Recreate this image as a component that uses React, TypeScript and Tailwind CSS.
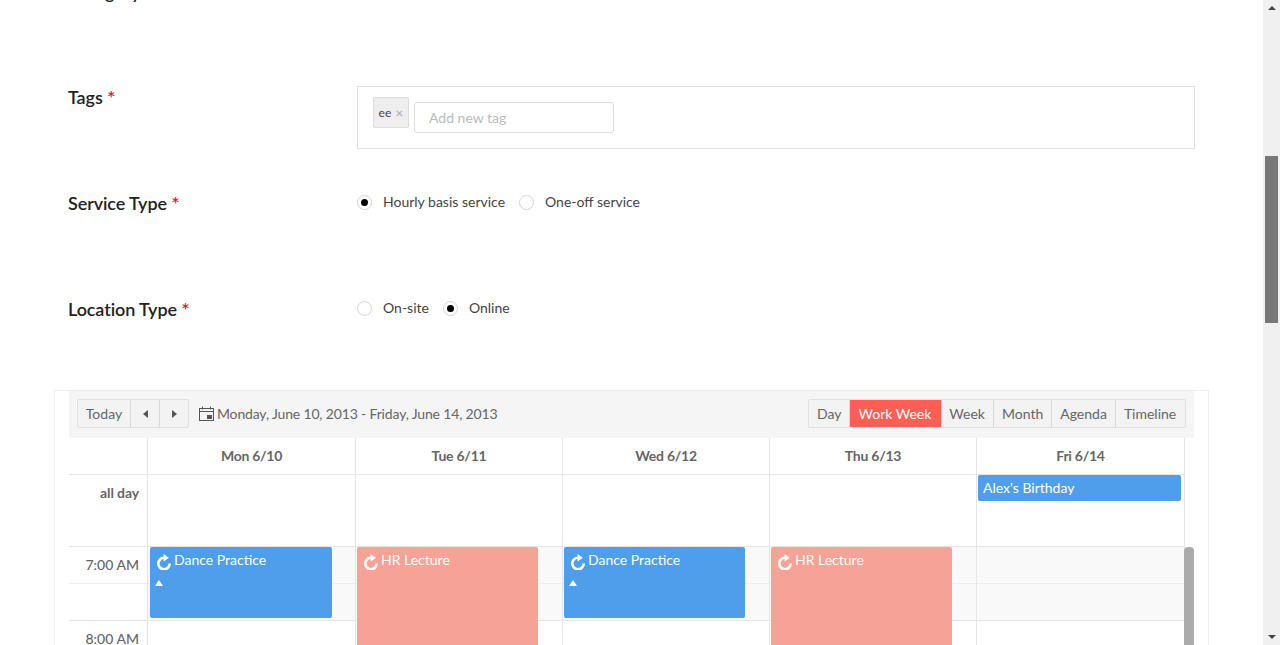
import React from 'react'

const days = ['Mon 6/10', 'Tue 6/11', 'Wed 6/12', 'Thu 6/13', 'Fri 6/14']
const dayWidths = ['w-[208px]', 'w-[207px]', 'w-[207px]', 'w-[207px]', 'w-[209px]']
const views = [
  { name: 'Day', pad: 'px-[8px]' },
  { name: 'Work Week', pad: 'pr-[10px] pl-[8px] bg-[#ff5e55] text-white' },
  { name: 'Week', pad: 'pr-[8px] pl-[7px]' },
  { name: 'Month', pad: 'px-[8px]' },
  { name: 'Agenda', pad: 'px-[8px]' },
  { name: 'Timeline', pad: 'pr-[8px] pl-[8px] grow' },
]

function Label({ text }: { text: string }) {
  return (
    <div className="w-[289px] shrink-0 text-[18px] leading-[22px] font-semibold tracking-[-0.1px] text-[#222]">
      {text} <span className="relative top-[1px] text-[20px] leading-[16px] text-[#e8192c]">*</span>
    </div>
  )
}

function Radio({ label, checked }: { label: string; checked?: boolean }) {
  return (
    <div className="flex items-center gap-[11px]">
      <span className="flex h-[15px] w-[15px] items-center justify-center rounded-full border border-[#d4d4d4] bg-white">
        {checked && <span className="h-[7px] w-[7px] rounded-full bg-black" />}
      </span>
      <span className="text-[14px] leading-[20px] text-[#444]">{label}</span>
    </div>
  )
}

function Repeat({ className }: { className?: string }) {
  return (
    <svg viewBox="0 0 16 16" className={className}>
      <path d="M8 3.8 A5.7 5.7 0 1 0 13.7 9.5" fill="none" stroke="white" strokeWidth="2.6" />
      <path d="M7.6 0 L12.8 3.8 L7.6 7.4 Z" fill="white" />
    </svg>
  )
}

function CalendarIcon() {
  return (
    <svg viewBox="0 0 15 15" className="ml-[10px] h-[15px] w-[15px] shrink-0">
      <rect x="0.5" y="2.5" width="14" height="12" fill="none" stroke="#555" />
      <path d="M0.5 5.5 H14.5" stroke="#555" />
      <path d="M3.5 0.5 V3.5 M11.5 0.5 V3.5" stroke="#555" />
      <rect x="8" y="9" width="5" height="4" fill="#555" />
    </svg>
  )
}

function EventBlock({ title, color, x, h, w, up }: { title: string; color: string; x: string; h: string; w: string; up?: boolean }) {
  return (
    <div className={`absolute top-0 z-10 rounded-t-[2px] px-[5px] pt-[3px] text-[14px] leading-[20px] text-white ${color} ${x} ${h} ${w}`}>
      <div className="flex items-start gap-[2px]">
        <Repeat className="mt-[4px] ml-[1px] h-[16px] w-[16px] shrink-0" />
        <span>{title}</span>
      </div>
      {up && <div className="mt-[10px] h-0 w-0 border-x-[4px] border-b-[6px] border-x-transparent border-b-white" />}
    </div>
  )
}

export default function App() {
  return (
    <div className="flex h-[645px] overflow-hidden bg-white font-['Lato','Liberation_Sans',sans-serif]">
      <main className="min-w-0 flex-1 overflow-hidden pl-[54px]">
        <div className="mt-[-20px] h-[20px] pl-[14px] text-[18px] leading-[24px] font-semibold text-[#222]">Category</div>

        <section className="pt-[86px] pl-[14px]">
          <div className="flex">
            <Label text="Tags" />
            <div className="flex h-[63px] w-[838px] items-start gap-[5px] border border-[#e2e2e2] px-[15px] pt-[10px]">
              <span className="flex h-[31px] w-[36px] items-center justify-center gap-[4px] rounded-[2px] border border-[#dcdcdc] bg-[#eeeeee] text-[12px] text-[#444]">
                ee <span className="text-[14px] text-[#aaa]">×</span>
              </span>
              <div className="mt-[5px] flex h-[31px] w-[200px] items-center rounded-[3px] border border-[#dedede] px-[14px] pb-[1px] text-[14px] text-[#bbb]">Add new tag</div>
            </div>
          </div>
          <div className="mt-[43px] flex h-[63px]">
            <Label text="Service Type" />
            <div className="flex h-[20px] gap-[14px] text-[14px]">
              <Radio label="Hourly basis service" checked />
              <Radio label="One-off service" />
            </div>
          </div>
          <div className="mt-[43px] flex h-[63px]">
            <Label text="Location Type" />
            <div className="flex h-[20px] gap-[14px]">
              <Radio label="On-site" />
              <Radio label="Online" checked />
            </div>
          </div>
        </section>

        <section className="mt-[29px] h-[300px] w-[1155px] border border-[#eeeeee] px-[14px] text-[14px] text-[#666]">
          <div className="flex h-[47px] items-center justify-between bg-[#f5f5f5] px-[8px] pb-[2px]">
            <div className="flex items-center">
              <div className="flex h-[29px] divide-x divide-[#d8d8d8] rounded-[2px] border border-[#e0e0e0] bg-[#f3f3f3]">
                <span className="flex w-[53px] items-center justify-center">Today</span>
                <span className="flex w-[29px] items-center justify-center">
                  <span className="h-0 w-0 border-y-[4px] border-r-[5px] border-y-transparent border-r-[#555]" />
                </span>
                <span className="flex w-[28px] items-center justify-center">
                  <span className="h-0 w-0 border-y-[4px] border-l-[5px] border-y-transparent border-l-[#555]" />
                </span>
              </div>
              <CalendarIcon />
              <span className="ml-[3px] tracking-[-0.16px]">Monday, June 10, 2013 - Friday, June 14, 2013</span>
            </div>
            <div className="flex h-[29px] w-[378px] divide-x divide-[#d8d8d8] rounded-[2px] border border-[#e0e0e0] bg-[#f3f3f3]">
              {views.map((view) => (
                <span key={view.name} className={`flex items-center ${view.pad}`}>{view.name}</span>
              ))}
            </div>
          </div>

          <div className="flex h-[37px] w-[1116px] border-b border-[#e6e6e6]">
            <div className="w-[78px] shrink-0" />
            {days.map((day, i) => (
              <div key={day} className={`flex items-center justify-center border-l border-[#e6e6e6] pb-[2px] font-bold tracking-[-0.25px] ${dayWidths[i]} ${i === 4 ? 'border-r' : ''}`}>{day}</div>
            ))}
          </div>

          <div className="flex h-[72px] w-[1116px] border-b border-[#e6e6e6]">
            <div className="w-[78px] shrink-0 pt-[7px] pr-[8px] text-right text-[14px] font-bold tracking-[-0.1px]">all day</div>
            {days.map((day, i) => (
              <div key={day} className={`border-l border-[#e6e6e6] ${dayWidths[i]} ${i === 4 ? 'border-r' : ''}`}>
                {i === 4 && (
                  <div className="ml-[1px] h-[26px] w-[203px] rounded-[2px] bg-[#4f9eec] px-[5px] text-[14px] leading-[25px] text-white">Alex's Birthday</div>
                )}
              </div>
            ))}
          </div>

          <div className="relative flex w-[1125px]">
            <div className="w-[78px] shrink-0 text-right text-[14px]">
              <div className="h-[37px] border-b border-[#efefef] pt-[8px] pr-[8px] font-medium leading-[20px]">7:00 AM</div>
              <div className="h-[37px] border-b border-[#e6e6e6]" />
              <div className="h-[37px] pt-[8px] pr-[8px] font-medium leading-[20px]">8:00 AM</div>
            </div>
            {days.map((day, i) => (
              <div key={day} className={`relative border-l border-[#e6e6e6] ${dayWidths[i]} ${i === 4 ? 'border-r' : ''}`}>
                <div className="h-[37px] border-b border-[#efefef] bg-[#f9f9f9]" />
                <div className="h-[37px] border-b border-[#e6e6e6] bg-[#f9f9f9]" />
                <div className="h-[37px]" />
                {i === 0 && <EventBlock title="Dance Practice" color="bg-[#4f9eec] rounded-b-[2px]" x="left-[2px]" w="w-[182px]" h="h-[71px]" up />}
                {i === 1 && <EventBlock title="HR Lecture" color="bg-[#f7a296]" x="left-[1px]" w="w-[181px]" h="h-[98px]" />}
                {i === 2 && <EventBlock title="Dance Practice" color="bg-[#4f9eec] rounded-b-[2px]" x="left-[1px]" w="w-[181px]" h="h-[71px]" up />}
                {i === 3 && <EventBlock title="HR Lecture" color="bg-[#f7a296]" x="left-[1px]" w="w-[181px]" h="h-[98px]" />}
              </div>
            ))}
            <div className="absolute top-0 right-0 h-[98px] w-[10px] rounded-t-[4px] bg-[#ababab]" />
          </div>
        </section>
      </main>

      <aside className="relative flex w-[17px] shrink-0 flex-col items-center bg-[#f0f0f0]">
        <div className="mt-[6px] h-0 w-0 border-x-[4px] border-b-[4px] border-x-transparent border-b-[#444]" />
        <div className="mt-[146px] h-[167px] w-[13px] bg-[#787878]" />
        <div className="absolute bottom-[6px] h-0 w-0 border-x-[4px] border-t-[4px] border-x-transparent border-t-[#444]" />
      </aside>
    </div>
  )
}
